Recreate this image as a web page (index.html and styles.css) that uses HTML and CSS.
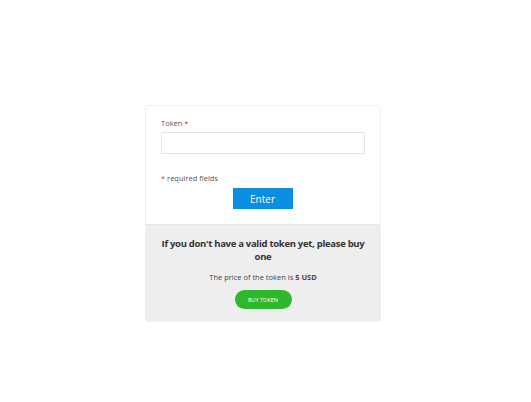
FILE: index.html
```html
<!DOCTYPE html>
<html lang="en">
<head>
    <meta charset="UTF-8">
    <title>Token</title>
    <link rel="stylesheet" href="styles.css">
</head>
<body>
    <div class="card">
        <form class="login-part">
            <label class="field-label" for="token">Token <span class="req">*</span></label>
            <input type="text" id="token" class="token-input">
            <p class="req-note"><span class="req">*</span> required fields</p>
            <button type="button" class="enter-btn">Enter</button>
        </form>
        <div class="buy-part">
            <h3>If you don't have a valid token yet, please buy one</h3>
            <p class="price">The price of the token is <b>5 USD</b></p>
            <button type="button" class="buy-btn">BUY TOKEN</button>
        </div>
    </div>
</body>
</html>
```

FILE: styles.css
```css
* { margin: 0; padding: 0; box-sizing: border-box; }
body {
    font-family: "Open Sans", sans-serif;
    background-color: #ffffff;
    color: #333;
}
.card {
    width: 236px;
    margin: 105px 0 0 145px;
    border: 1px solid #f0f0f0;
    border-radius: 3px;
    overflow: hidden;
}
.login-part {
    display: flex;
    flex-direction: column;
    padding: 12px 16px 15px 15px;
    background-color: #fff;
}
.field-label {
    font-size: 7.5px;
    color: #555;
    margin-bottom: 4px;
}
.req {
    color: #e03030;
}
.token-input {
    width: 204px;
    height: 22px;
    border: 1px solid #e4e4e8;
    border-radius: 1px;
}
.req-note {
    font-size: 7.5px;
    color: #555;
    margin-top: 19px;
}
.enter-btn {
    align-self: center;
    width: 60px;
    height: 21px;
    margin-top: 5px;
    background-color: #0b8de0;
    color: #fff;
    border: none;
    font-family: inherit;
    font-size: 10px;
}
.buy-part {
    background-color: #eeeeee;
    border-top: 1px solid #e6e6e6;
    text-align: center;
    padding: 12px 8px 12px;
}
.buy-part h3 {
    font-size: 9.5px;
    line-height: 13px;
    font-weight: 700;
    letter-spacing: -0.3px;
    color: #333;
}
.price {
    font-size: 7.5px;
    margin-top: 9px;
    color: #444;
}
.buy-btn {
    margin-top: 8px;
    width: 57px;
    height: 19px;
    border: none;
    border-radius: 10px;
    background-color: #2db82e;
    color: #fff;
    font-family: inherit;
    font-size: 5.5px;
}
```
